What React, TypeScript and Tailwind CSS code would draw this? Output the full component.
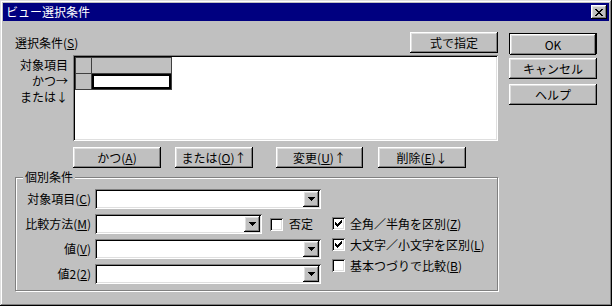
import React from 'react';

const raised =
  'bg-[#c0c0c0] shadow-[inset_-1px_-1px_0_#000,inset_1px_1px_0_#fff,inset_-2px_-2px_0_#808080,inset_2px_2px_0_#dfdfdf]';
const sunken =
  'bg-white shadow-[inset_1px_1px_0_#808080,inset_-1px_-1px_0_#fff,inset_2px_2px_0_#000,inset_-2px_-2px_0_#dfdfdf]';

// pixel glyphs, drawn as 1px rects so they stay crisp
const Pixels = ({ rows, w, h }: { rows: string[]; w: number; h: number }) => (
  <svg width={w} height={h} viewBox={`0 0 ${w} ${h}`} shapeRendering="crispEdges">
    {rows.flatMap((r, y) =>
      r.split('').map((c, x) => (c === 'X' ? <rect key={`${x}-${y}`} x={x} y={y} width={1} height={1} fill="#000" /> : null))
    )}
  </svg>
);

const CloseGlyph = () => (
  <Pixels w={8} h={7} rows={['XX....XX', '.XX..XX.', '..XXXX..', '...XX...', '..XXXX..', '.XX..XX.', 'XX....XX']} />
);
const ArrowGlyph = () => <Pixels w={7} h={4} rows={['XXXXXXX', '.XXXXX.', '..XXX..', '...X...']} />;
const CheckGlyph = () => (
  <Pixels w={7} h={7} rows={['......X', '.....XX', 'X...XXX', 'XX.XXX.', 'XXXXX..', '.XXX...', '..X....']} />
);

const Btn = ({ children, className = '' }: { children: React.ReactNode; className?: string }) => (
  <div className={`${raised} h-[21px] flex items-center justify-center ${className}`}>{children}</div>
);

const Combo = ({ width }: { width: string }) => (
  <div className={`${sunken} ${width} h-[20px] p-[2px] flex justify-end`}>
    <div className={`${raised} w-[16px] h-[16px] flex items-center justify-center`}>
      <ArrowGlyph />
    </div>
  </div>
);

const Check = ({ checked }: { checked?: boolean }) => (
  <div className={`${sunken} w-[13px] h-[13px] shrink-0 flex items-center justify-center`}>
    {checked && <CheckGlyph />}
  </div>
);

export default function App() {
  return (
    <div className="w-[612px] h-[306px] bg-[#c0c0c0] p-[3px] text-[12px] leading-none text-black font-['Noto_Sans_CJK_JP',sans-serif] shadow-[inset_-1px_-1px_0_#000,inset_1px_1px_0_#dfdfdf,inset_-2px_-2px_0_#808080,inset_2px_2px_0_#fff]">
      {/* Title bar */}
      <div className="h-[18px] bg-[#000080] flex items-center justify-between pl-[3px] pr-[2px]">
        <span className="text-white">ビュー選択条件</span>
        <div className={`${raised} w-[16px] h-[14px] flex items-center justify-center`}>
          <CloseGlyph />
        </div>
      </div>

      <div className="flex pt-[11px] pl-[11px]">
        {/* Left column */}
        <div className="w-[484px]">
          <div className="h-[21px] flex items-center justify-between">
            <span className="pl-[1px]">
              選択条件(<u>S</u>)
            </span>
            <Btn className="w-[88px]">式で指定</Btn>
          </div>

          <div className="flex mt-[2px]">
            <div className="w-[59px] pt-[2px] pr-[5px] text-right">
              <div className="h-[16px] leading-[16px]">対象項目</div>
              <div className="h-[16px] leading-[16px]">かつ→</div>
              <div className="h-[16px] leading-[16px]">または↓</div>
            </div>
            <div className={`${sunken} w-[425px] h-[86px] p-[2px]`}>
              <div className="inline-grid grid-cols-[15px_79px] grid-rows-[15px_15px] gap-px p-px bg-[#404040]">
                <div className="bg-[#c0c0c0]" />
                <div className="bg-[#c0c0c0]" />
                <div className="bg-[#c0c0c0]" />
                <div className="bg-white border-2 border-black" />
              </div>
            </div>
          </div>

          <div className="flex mt-[6px] pl-[59px]">
            <Btn className="w-[88px]">
              かつ(<u>A</u>)
            </Btn>
            <Btn className="w-[78px] ml-[14px]">
              または(<u>O</u>)↑
            </Btn>
            <Btn className="w-[87px] ml-[23px]">
              変更(<u>U</u>)↑
            </Btn>
            <Btn className="w-[88px] ml-[15px]">
              削除(<u>E</u>)↓
            </Btn>
          </div>

          {/* 個別条件 group */}
          <div className="relative mt-[9px] ml-[1px] w-[483px] h-[114px] border border-[#808080] shadow-[1px_1px_0_#fff,inset_1px_1px_0_#fff] pt-[11px] flex">
            <span className="absolute -top-[7px] left-[7px] px-[2px] bg-[#c0c0c0]">個別条件</span>
            <div className="w-[316px] flex flex-col gap-[5px]">
              <div className="flex items-center h-[20px]">
                <span className="w-[75px] text-right">
                  対象項目(<u>C</u>)
                </span>
                <div className="ml-[4px]">
                  <Combo width="w-[226px]" />
                </div>
              </div>
              <div className="flex items-center h-[20px]">
                <span className="w-[75px] text-right">
                  比較方法(<u>M</u>)
                </span>
                <div className="ml-[4px]">
                  <Combo width="w-[167px]" />
                </div>
                <div className="ml-[8px]">
                  <Check />
                </div>
                <span className="ml-[6px]">否定</span>
              </div>
              <div className="flex items-center h-[20px]">
                <span className="w-[75px] text-right">
                  値(<u>V</u>)
                </span>
                <div className="ml-[4px]">
                  <Combo width="w-[226px]" />
                </div>
              </div>
              <div className="flex items-center h-[20px]">
                <span className="w-[75px] text-right">
                  値2(<u>2</u>)
                </span>
                <div className="ml-[4px]">
                  <Combo width="w-[226px]" />
                </div>
              </div>
            </div>
            <div className="flex flex-col gap-[8px] mt-[28px]">
              <div className="flex items-center h-[13px]">
                <Check checked />
                <span className="ml-[5px]">
                  全角／半角を区別(<u>Z</u>)
                </span>
              </div>
              <div className="flex items-center h-[13px]">
                <Check checked />
                <span className="ml-[5px]">
                  大文字／小文字を区別(<u>L</u>)
                </span>
              </div>
              <div className="flex items-center h-[13px]">
                <Check />
                <span className="ml-[5px]">
                  基本つづりで比較(<u>B</u>)
                </span>
              </div>
            </div>
          </div>
        </div>

        {/* Right column */}
        <div className="ml-[11px] w-[88px] pt-[1px] flex flex-col">
          <div className="h-[21px] border border-black">
            <Btn className="h-[19px]">OK</Btn>
          </div>
          <Btn className="mt-[4px]">キャンセル</Btn>
          <Btn className="mt-[5px]">ヘルプ</Btn>
        </div>
      </div>
    </div>
  );
}
